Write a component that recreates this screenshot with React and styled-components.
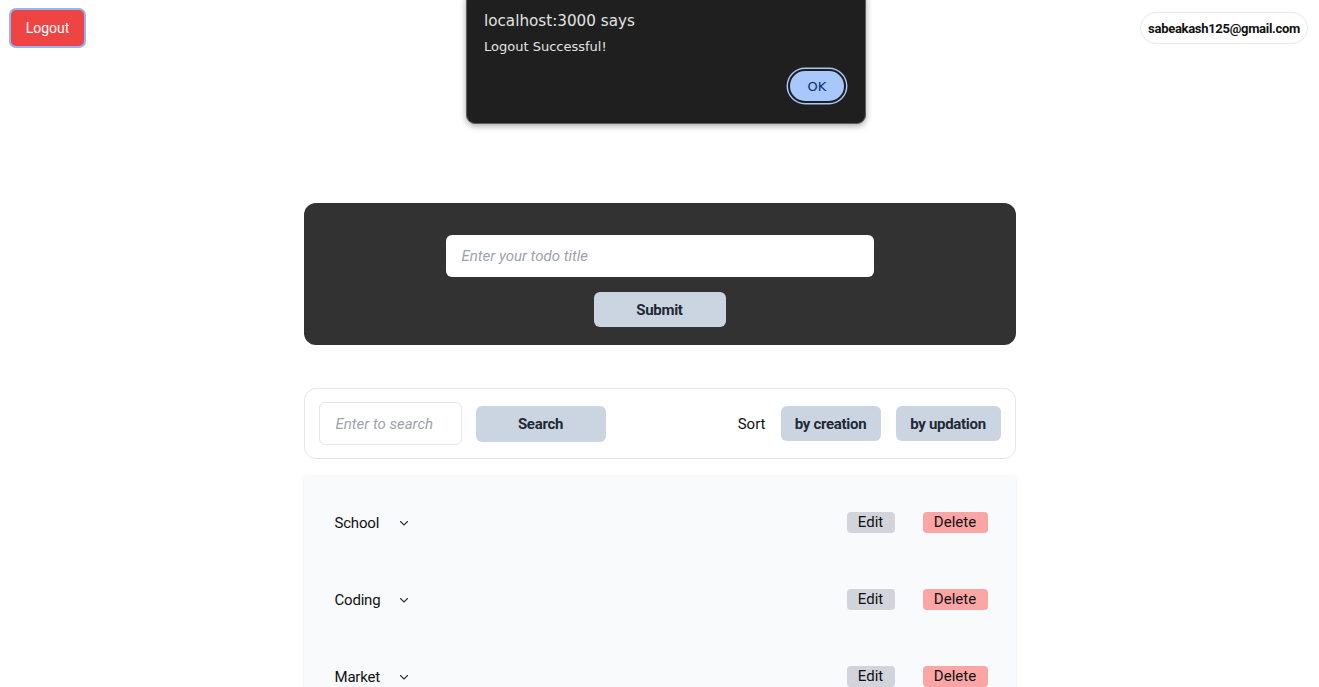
import React from "react";
import styled, { createGlobalStyle } from "styled-components";

const Global = createGlobalStyle`
  html, body { margin: 0; padding: 0; background: #ffffff; }
  body { font-family: Roboto, "Noto Sans", sans-serif; color: #111827; }
  * { box-sizing: border-box; }
`;

const Page = styled.div`
  position: relative;
  min-height: 687px;
  overflow: hidden;
`;

const TopBar = styled.header`
  display: flex;
  justify-content: space-between;
  align-items: flex-start;
  padding: 10px 11px 0 11px;
`;

const LogoutButton = styled.button`
  height: 36px;
  width: 73px;
  border: none;
  border-radius: 5px;
  background: #ef4444;
  color: #ffffff;
  font-family: Roboto, sans-serif;
  font-size: 14px;
  box-shadow: 0 0 0 2px #93b4f5;
  cursor: pointer;
`;

const EmailPill = styled.div`
  margin-top: 2px;
  height: 32px;
  padding: 0 7px;
  display: flex;
  align-items: center;
  border: 1px solid #e5e7eb;
  border-radius: 16px;
  font-size: 13px;
  font-weight: 700;
  letter-spacing: -0.3px;
  color: #111111;
`;

const Main = styled.main`
  width: 712px;
  margin: 157px auto 0;
  display: flex;
  flex-direction: column;
`;

const FormPanel = styled.form`
  background: #323232;
  border-radius: 12px;
  height: 142px;
  padding-top: 32px;
  display: flex;
  flex-direction: column;
  align-items: center;
  gap: 15px;
`;

const TitleInput = styled.input`
  width: 428px;
  height: 42px;
  border: none;
  border-radius: 6px;
  background: #fff;
  padding: 0 16px;
  font-family: Roboto, sans-serif;
  font-size: 15px;
  outline: none;
  &::placeholder { color: #9ca3af; font-style: italic; }
`;

const SlateButton = styled.button`
  width: ${p => p.$w}px;
  height: ${p => p.$h}px;
  border: none;
  border-radius: 6px;
  background: #cbd5e1;
  color: #1f2937;
  font-family: Roboto, sans-serif;
  font-size: 15px;
  font-weight: 700;
  letter-spacing: -0.3px;
  padding: 0;
  flex-shrink: 0;
`;

const SearchBar = styled.div`
  margin-top: 43px;
  height: 71px;
  border: 1px solid #e5e7eb;
  border-radius: 12px;
  display: flex;
  align-items: center;
  padding: 0 14px;
  gap: 14px;
`;

const SearchInput = styled.input`
  width: 143px;
  height: 43px;
  border: 1px solid #e5e7eb;
  border-radius: 6px;
  padding: 0 16px;
  font-family: Roboto, sans-serif;
  font-size: 15px;
  outline: none;
  &::placeholder { color: #9ca3af; font-style: italic; }
`;

const SortGroup = styled.div`
  margin-left: auto;
  display: flex;
  align-items: center;
  gap: 15px;
`;

const SortLabel = styled.span`
  font-size: 15px;
  color: #111;
`;

const List = styled.ul`
  list-style: none;
  margin: 16px 0 0;
  padding: 9px 28px 0 31px;
  background: #f8fafc;
  border-radius: 4px;
  box-shadow: 0 1px 3px rgba(0,0,0,0.08), 0 1px 2px rgba(0,0,0,0.04);
`;

const Row = styled.li`
  height: 77px;
  display: flex;
  align-items: center;
`;

const TodoTitle = styled.span`
  font-size: 15px;
  color: #111;
  letter-spacing: -0.2px;
`;

const Chevron = styled.span`
  display: inline-flex;
  margin-left: ${p => p.$gap}px;
  color: #333;
`;

const Actions = styled.div`
  margin-left: auto;
  display: flex;
  gap: 28px;
`;

const SmallButton = styled.button`
  height: 21px;
  width: ${p => p.$w}px;
  border: none;
  border-radius: 4px;
  background: ${p => (p.$danger ? "#fca5a5" : "#d1d5db")};
  color: #111;
  font-family: Roboto, sans-serif;
  font-size: 15px;
  padding: 0;
  line-height: 21px;
`;

const Dialog = styled.div`
  position: absolute;
  top: -10px;
  left: 466px;
  width: 400px;
  height: 134px;
  background: #1f1f1f;
  border: 1px solid #5c5c5c;
  border-radius: 9px;
  box-shadow: 0 2px 6px rgba(0,0,0,0.35);
  padding: 20px 17px 0 17px;
  font-family: "DejaVu Sans", sans-serif;
  display: flex;
  flex-direction: column;
`;

const DialogTitle = styled.div`
  color: #e3e3e3;
  font-size: 15.2px;
  line-height: 20px;
`;

const DialogMsg = styled.div`
  margin-top: 8px;
  color: #e3e3e3;
  font-size: 13px;
  line-height: 16px;
`;

const DialogFooter = styled.div`
  display: flex;
  justify-content: flex-end;
  margin-top: 13px;
  padding-right: 1px;
`;

const OkButton = styled.button`
  width: 58px;
  height: 34px;
  margin-top: 1px;
  margin-right: 1px;
  border-radius: 17px;
  background: #a8c7fa;
  border: 2px solid #1f1f1f;
  box-shadow: 0 0 0 1.5px #a8c7fa;
  color: #062e6f;
  font-family: "DejaVu Sans", sans-serif;
  font-size: 13px;
`;

const ChevronIcon = () => (
  <svg width="12" height="12" viewBox="0 0 12 12" fill="none" stroke="currentColor" strokeWidth="1.1" strokeLinecap="round" strokeLinejoin="round">
    <path d="M2.5 4.5 L6 8 L9.5 4.5" />
  </svg>
);

const todos = [
  { title: "School", gap: 19 },
  { title: "Coding", gap: 18 },
  { title: "Market", gap: 18 },
];

export default function App() {
  return (
    <Page>
      <Global />
      <TopBar>
        <LogoutButton>Logout</LogoutButton>
        <EmailPill>sabeakash125@gmail.com</EmailPill>
      </TopBar>
      <Main>
        <FormPanel onSubmit={e => e.preventDefault()}>
          <TitleInput placeholder="Enter your todo title" />
          <SlateButton $w={132} $h={35}>Submit</SlateButton>
        </FormPanel>
        <SearchBar>
          <SearchInput placeholder="Enter to search" />
          <SlateButton $w={130} $h={36}>Search</SlateButton>
          <SortGroup>
            <SortLabel>Sort</SortLabel>
            <SlateButton $w={100} $h={35}>by creation</SlateButton>
            <SlateButton $w={105} $h={35}>by updation</SlateButton>
          </SortGroup>
        </SearchBar>
        <List>
          {todos.map(t => (
            <Row key={t.title}>
              <TodoTitle>{t.title}</TodoTitle>
              <Chevron $gap={t.gap}><ChevronIcon /></Chevron>
              <Actions>
                <SmallButton $w={48}>Edit</SmallButton>
                <SmallButton $w={65} $danger>Delete</SmallButton>
              </Actions>
            </Row>
          ))}
        </List>
      </Main>
      <Dialog>
        <DialogTitle>localhost:3000 says</DialogTitle>
        <DialogMsg>Logout Successful!</DialogMsg>
        <DialogFooter>
          <OkButton>OK</OkButton>
        </DialogFooter>
      </Dialog>
    </Page>
  );
}
